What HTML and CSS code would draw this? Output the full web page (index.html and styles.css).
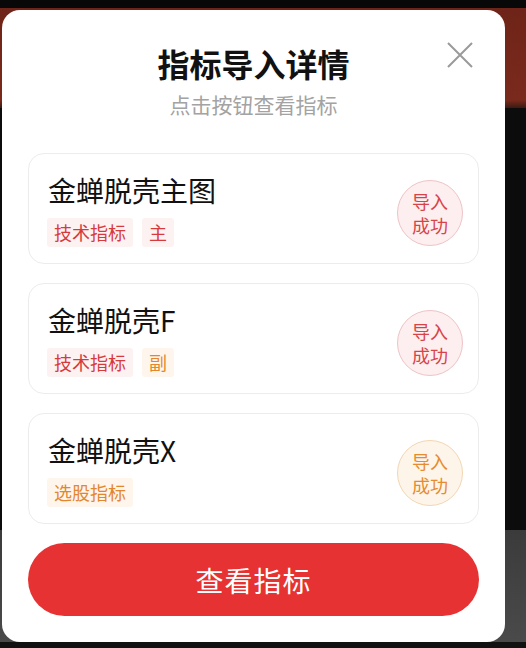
FILE: index.html
```html
<!DOCTYPE html>
<html lang="zh-CN">
<head>
    <meta charset="UTF-8">
    <meta name="viewport" content="width=device-width, initial-scale=1.0">
    <title>指标导入详情</title>
    <link rel="stylesheet" href="styles.css">
</head>
<body>
    <div class="backdrop">
        <div class="modal">
            <button class="close" aria-label="关闭">
                <svg width="26" height="26" viewBox="0 0 26 26">
                    <path d="M1 1 L25 25 M25 1 L1 25" stroke="#9a9a9a" stroke-width="2" fill="none"/>
                </svg>
            </button>
            <h1>指标导入详情</h1>
            <p class="sub">点击按钮查看指标</p>

            <div class="list">
                <div class="card">
                    <div class="info">
                        <div class="name">金蝉脱壳主图</div>
                        <div class="tags">
                            <span class="tag red">技术指标</span>
                            <span class="tag red">主</span>
                        </div>
                    </div>
                    <div class="status red"><span>导入</span><span>成功</span></div>
                </div>

                <div class="card">
                    <div class="info">
                        <div class="name">金蝉脱壳F</div>
                        <div class="tags">
                            <span class="tag red">技术指标</span>
                            <span class="tag orange">副</span>
                        </div>
                    </div>
                    <div class="status red"><span>导入</span><span>成功</span></div>
                </div>

                <div class="card">
                    <div class="info">
                        <div class="name">金蝉脱壳X</div>
                        <div class="tags">
                            <span class="tag orange">选股指标</span>
                        </div>
                    </div>
                    <div class="status orange"><span>导入</span><span>成功</span></div>
                </div>
            </div>

            <button class="view-btn">查看指标</button>
        </div>
    </div>
</body>
</html>
```

FILE: styles.css
```css
body {
    margin: 0;
    font-family: "Noto Sans CJK SC", "Noto Sans", sans-serif;
    background-color: #0b0b0b;
}
.backdrop {
    height: 648px;
    overflow: hidden;
    background:
        linear-gradient(to bottom, #080808 0, #080808 8px, #6e2418 8px, #7a2a1c 100px, #3a1a14 108px, #0c0c0c 108px, #0c0c0c 530px, #3b3b3b 530px, #4a4a4a 642px, #111 642px);
}
.modal {
    position: relative;
    margin: 10px 0 0 2px;
    width: 503px;
    height: 632px;
    box-sizing: border-box;
    padding: 33px 26px 26px 26px;
    background-color: #fff;
    border-radius: 18px;
    display: flex;
    flex-direction: column;
}
.close {
    position: absolute;
    top: 32px;
    right: 32px;
    width: 26px;
    height: 26px;
    padding: 0;
    border: none;
    background: none;
}
.close svg {
    display: block;
}
h1 {
    margin: 0;
    font-size: 32px;
    line-height: 40px;
    font-weight: 700;
    color: #111;
    text-align: center;
}
.sub {
    margin: 9px 0 0;
    font-size: 21px;
    line-height: 24px;
    color: #a3a3a3;
    text-align: center;
}
.list {
    margin-top: 37px;
    display: flex;
    flex-direction: column;
    gap: 19px;
}
.card {
    height: 111px;
    box-sizing: border-box;
    border: 1px solid #ececec;
    border-radius: 16px;
    padding: 18px 15px 17px 18px;
    display: flex;
    align-items: center;
    justify-content: space-between;
}
.name {
    font-size: 28px;
    line-height: 36px;
    color: #111;
    padding-left: 1px;
}
.tags {
    margin-top: 10px;
    display: flex;
    gap: 9px;
}
.tag {
    height: 29px;
    line-height: 29px;
    padding: 0 7px;
    font-size: 18px;
    border-radius: 3px;
}
.tag.red {
    color: #d63a3d;
    background-color: #fdf2f2;
}
.tag.orange {
    color: #e4862c;
    background-color: #fef6ec;
}
.status {
    width: 66px;
    height: 66px;
    margin-top: 8px;
    box-sizing: border-box;
    border-radius: 50%;
    display: flex;
    flex-direction: column;
    align-items: center;
    justify-content: center;
    font-size: 18px;
    line-height: 24px;
}
.status.red {
    color: #d8434a;
    background-color: #fdeff0;
    border: 1px solid #eec3c6;
}
.status.orange {
    color: #e68b30;
    background-color: #fef5ea;
    border: 1px solid #f3d6b2;
}
.view-btn {
    margin-top: 19px;
    height: 73px;
    border: none;
    border-radius: 37px;
    background-color: #e63232;
    color: #fff;
    font-family: inherit;
    font-size: 28px;
    letter-spacing: 1px;
}
```
